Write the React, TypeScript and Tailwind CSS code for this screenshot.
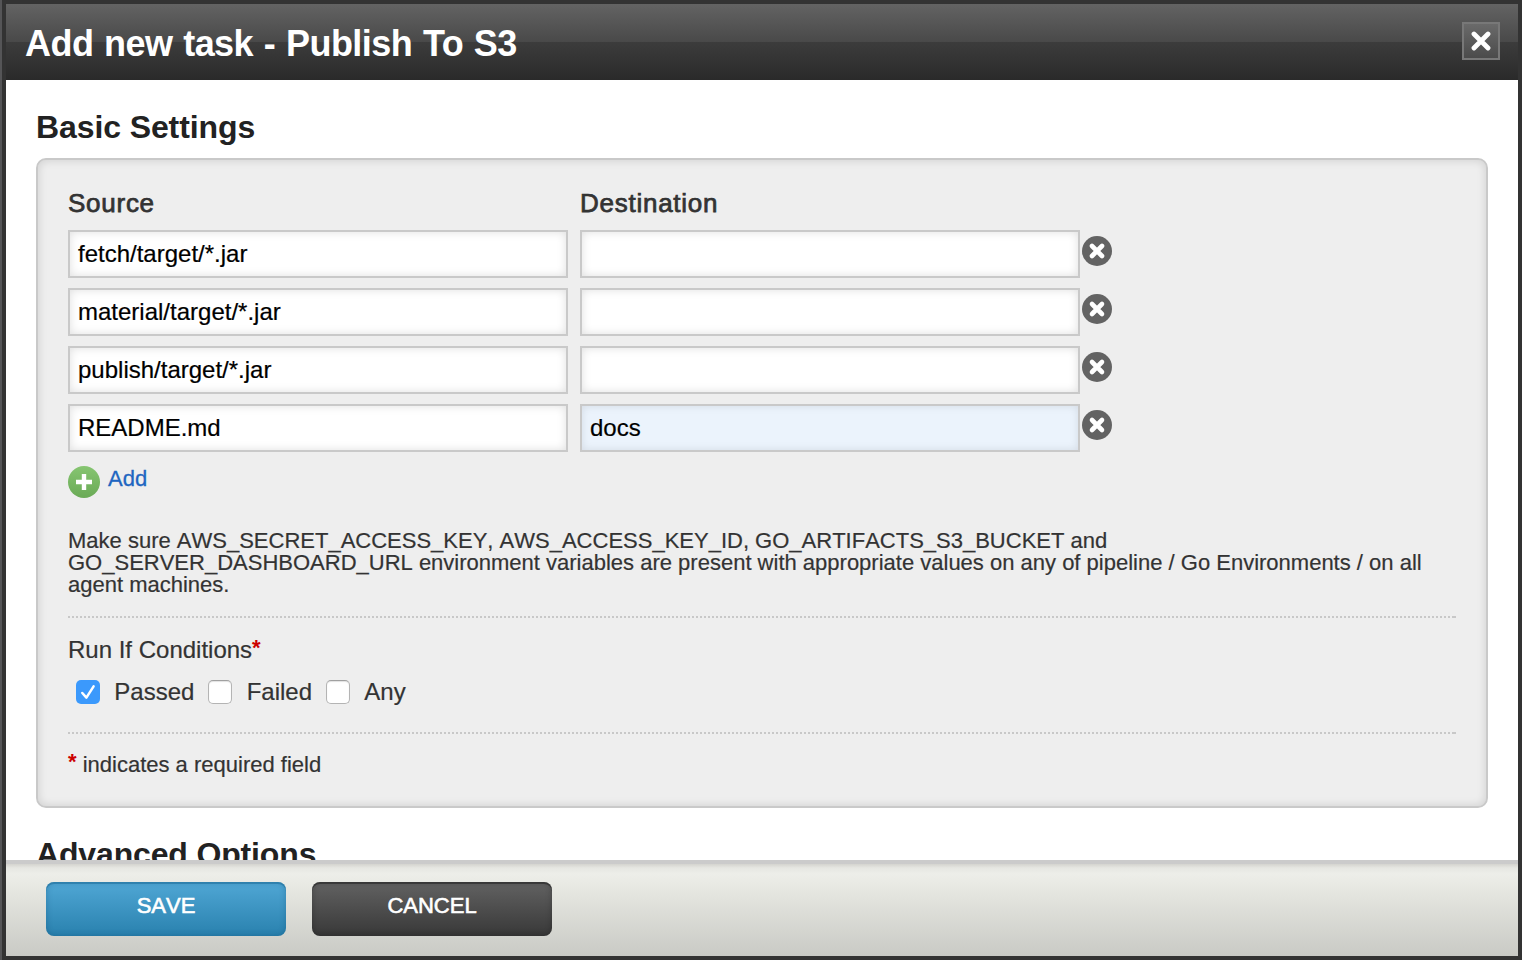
import React, { useState } from "react";

type Row = { source: string; destination: string };

const initialRows: Row[] = [
  { source: "fetch/target/*.jar", destination: "" },
  { source: "material/target/*.jar", destination: "" },
  { source: "publish/target/*.jar", destination: "" },
  { source: "README.md", destination: "docs" },
];

function Field({ value, active }: { value: string; active?: boolean }) {
  return (
    <div
      className={
        "flex h-12 w-[500px] items-center border-2 border-[#c9c9c9] px-2 text-[24px] leading-6 text-black [-webkit-text-stroke:0.2px_black] " +
        (active ? "bg-[#ebf3fc] shadow-[inset_0_0_8px_rgba(0,0,0,0.1)]" : "bg-white shadow-[inset_0_0_10px_rgba(0,0,0,0.13)]")
      }
    >
      {value}
    </div>
  );
}

function RemoveIcon() {
  return (
    <svg width="30" height="30" viewBox="0 0 30 30" className="block">
      <circle cx="15" cy="15" r="15" fill="#636363" />
      <path d="M10 10L20 20M20 10L10 20" stroke="#fff" strokeWidth="4.6" strokeLinecap="round" />
    </svg>
  );
}

function AddIcon() {
  return (
    <svg width="32" height="32" viewBox="0 0 32 32" className="block">
      <defs>
        <linearGradient id="addFill" x1="0" y1="0" x2="0" y2="1">
          <stop offset="0" stopColor="#86c571" />
          <stop offset="1" stopColor="#6aaa56" />
        </linearGradient>
      </defs>
      <circle cx="16" cy="16" r="16" fill="url(#addFill)" />
      <path d="M8 16H24M16 8V24" stroke="#fff" strokeWidth="4.4" />
    </svg>
  );
}

function Separator({ className }: { className: string }) {
  return (
    <div
      className={
        "h-[2px] border-r-2 border-[#c8c8c8] bg-[repeating-linear-gradient(to_right,#c8c8c8_0px,#c8c8c8_2px,transparent_2px,transparent_4px)] " +
        className
      }
    />
  );
}

function Check({ label, checked, onClick }: { label: string; checked: boolean; onClick: () => void }) {
  return (
    <button type="button" onClick={onClick} className="flex items-center text-[24px] leading-7">
      {checked ? (
        <span className="block size-6 rounded-[5px] bg-[#3b99fc]">
          <svg width="24" height="24" viewBox="0 0 24 24" fill="none" className="block">
            <path d="M6.3 13L10.4 17.6L17.6 6.4" stroke="#fff" strokeWidth="2.5" strokeLinecap="round" strokeLinejoin="round" />
          </svg>
        </span>
      ) : (
        <span className="block size-6 rounded-[5px] border border-[#b4b4b4] border-t-[#a0a0a0] bg-white shadow-[inset_0_1px_1px_rgba(0,0,0,0.12)]" />
      )}
      <span className="ml-[14.3px]">{label}</span>
    </button>
  );
}

export default function App() {
  const [rows] = useState(initialRows);
  const [runIf, setRunIf] = useState("Passed");

  return (
    <div className="h-[960px] w-[1522px] overflow-hidden bg-[#555557] pl-[2px] font-['Liberation_Sans',Arial,sans-serif] text-[#333] [font-kerning:none]">
      <div className="flex h-full flex-col border-4 border-[#333]">
        <header className="flex h-[76px] shrink-0 items-center justify-between bg-[linear-gradient(to_bottom,#636363_0%,#494949_50%,#3c3c3c_50%,#2a2a2a_100%)] pl-[19px] pr-[18px]">
          <h1 className="whitespace-nowrap pt-[3px] text-[36px] leading-[40px] font-bold tracking-[-0.55px] text-white [font-kerning:normal] [word-spacing:1.3px]">
            Add new task - Publish To S3
          </h1>
          <button
            type="button"
            aria-label="Close"
            className="mb-[2px] flex size-[38px] items-center justify-center border-2 border-[#787878] bg-[linear-gradient(to_bottom,#6a6a6a,#4b4b4b)]"
          >
            <svg width="20" height="20" viewBox="0 0 20 20" className="block">
              <path d="M3 3L17 17M17 3L3 17" stroke="#fff" strokeWidth="4.8" strokeLinecap="round" />
            </svg>
          </button>
        </header>

        <main className="min-h-0 flex-1 overflow-hidden bg-white px-[30px] pt-[27px]">
          <h2 className="h-[51px] text-[32px] leading-[40px] font-bold tracking-[-0.1px] text-[#222]">Basic Settings</h2>

          <section className="h-[650px] rounded-[10px] border-2 border-[#c9c9c9] bg-[#eee] px-[30px] pt-[28px] shadow-[inset_0_0_10px_rgba(0,0,0,0.14)]">
            <div className="flex h-[42px] gap-3 text-[26px] leading-[30px] tracking-[0.74px] [-webkit-text-stroke:0.75px_#333]">
              <div className="w-[500px]">Source</div>
              <div className="w-[500px]">Destination</div>
            </div>

            <div className="flex flex-col gap-[10px]">
              {rows.map((row) => (
                <div key={row.source} className="flex">
                  <Field value={row.source} />
                  <div className="ml-3">
                    <Field value={row.destination} active={row.destination !== ""} />
                  </div>
                  <button type="button" aria-label="Remove" className="mt-[6px] ml-[2px] size-[30px]">
                    <RemoveIcon />
                  </button>
                </div>
              ))}
            </div>

            <div className="mt-[14px] flex h-[32px]">
              <AddIcon />
              <a className="ml-2 text-[22px] leading-[26px] text-[#1e66c1] [-webkit-text-stroke:0.3px_#1e66c1]">Add</a>
            </div>

            <div className="[-webkit-text-stroke:0.2px_#333]">
              <p className="mt-[32px] text-[22px] leading-[22px] whitespace-nowrap">
                Make sure AWS_SECRET_ACCESS_KEY, AWS_ACCESS_KEY_ID, GO_ARTIFACTS_S3_BUCKET and
                <br />
                GO_SERVER_DASHBOARD_URL environment variables are present with appropriate values on any of pipeline / Go Environments / on all
                <br />
                agent machines.
              </p>

              <Separator className="mt-5" />

              <div className="mt-[18px] h-7 text-[24px] leading-7">
                Run If Conditions
                <span className="relative -top-[3px] text-[22px] font-bold text-[#c00] [-webkit-text-stroke:0]">*</span>
              </div>
              <div className="mt-[14px] ml-2 flex gap-[14px]">
                {["Passed", "Failed", "Any"].map((label) => (
                  <Check key={label} label={label} checked={runIf === label} onClick={() => setRunIf(label)} />
                ))}
              </div>

              <Separator className="mt-[26px]" />

              <div className="mt-[19px] h-6 text-[22px] leading-[24px]">
                <span className="relative -top-[3px] font-bold text-[#c00] [-webkit-text-stroke:0]">*</span> indicates a required field
              </div>
            </div>
          </section>

          <h2 className="mt-[26px] text-[32px] leading-[40px] font-bold tracking-[-0.15px] text-[#222]">Advanced Options</h2>
        </main>

        <footer className="flex h-24 shrink-0 gap-[26px] border-t-4 border-[#cbcbcb] bg-[linear-gradient(to_bottom,#d4d4cf_0px,#e6e7e2_4px,#edeee9_10px,#e4e5df_30px,#c9cac5_92px)] pl-10 pt-[18px] text-[22px] leading-[26px] text-white">
          <button
            type="button"
            className="flex h-[54px] w-[240px] justify-center rounded-lg bg-[linear-gradient(to_bottom,#50a7d5,#2981ae)] pt-[11px] shadow-[inset_0_2px_0_rgba(20,100,145,0.45),inset_0_0_6px_rgba(0,60,100,0.3)] [-webkit-text-stroke:0.6px_white]"
          >
            SAVE
          </button>
          <button
            type="button"
            className="flex h-[54px] w-[240px] justify-center rounded-lg bg-[linear-gradient(to_bottom,#626262,#383838)] pt-[11px] shadow-[inset_0_2px_0_rgba(0,0,0,0.35),inset_0_0_6px_rgba(0,0,0,0.25)] [-webkit-text-stroke:0.6px_white]"
          >
            CANCEL
          </button>
        </footer>
      </div>
    </div>
  );
}
